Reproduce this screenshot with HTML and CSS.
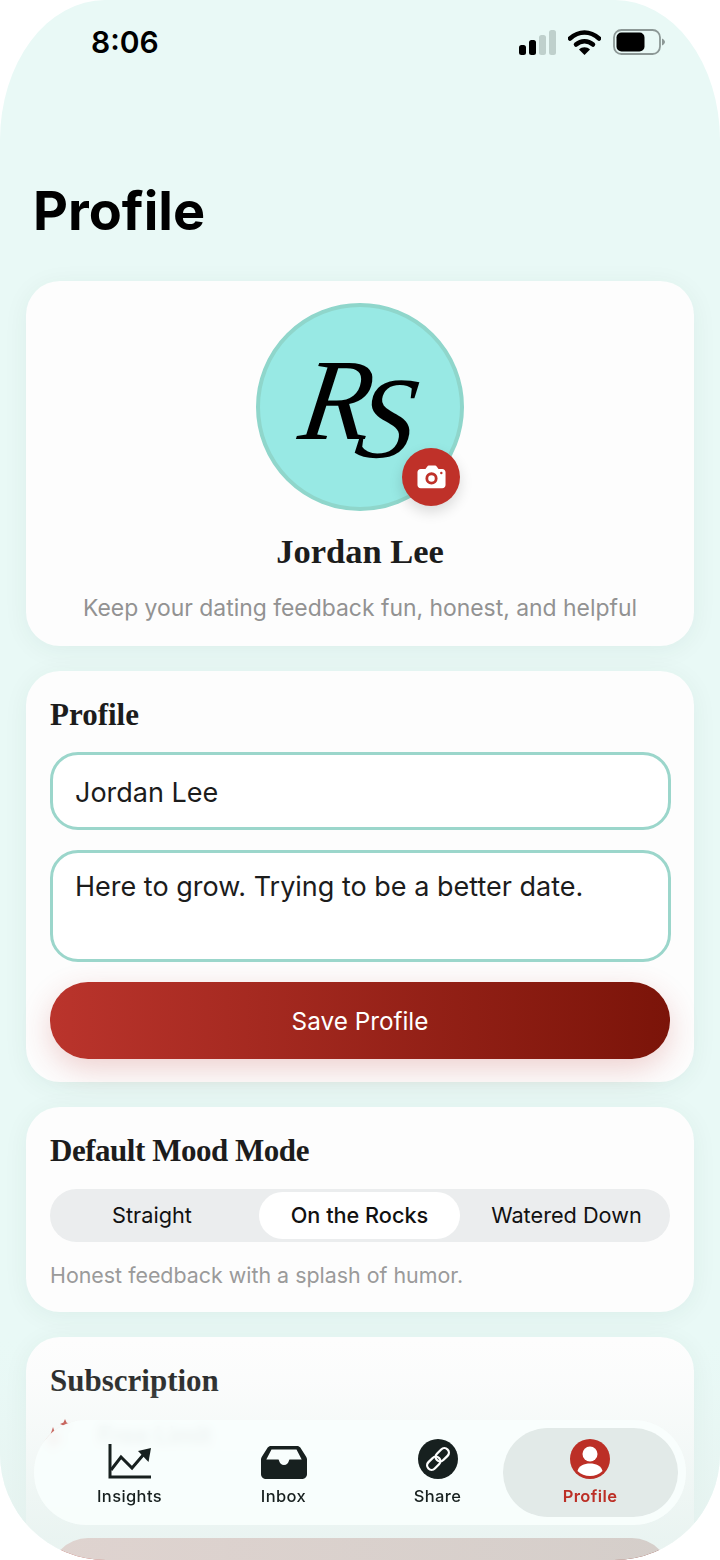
FILE: index.html
```html
<!DOCTYPE html>
<html>
<head>
    <title>Profile</title>
    <link rel="stylesheet" href="styles.css">
</head>
<body>
    <div class="phone">
        <div class="status-bar">
            <div class="status-time">8:06</div>
            <div class="status-icons">
                <svg class="icon-signal" width="37" height="25" viewBox="0 0 37 25">
                    <rect x="0" y="15" width="7" height="10" rx="2.5" fill="#000"/>
                    <rect x="10" y="10" width="7" height="15" rx="2.5" fill="#000"/>
                    <rect x="20" y="5" width="7" height="20" rx="2.5" fill="#bfd0cc"/>
                    <rect x="30" y="0" width="7" height="25" rx="2.5" fill="#bfd0cc"/>
                </svg>
                <svg class="icon-wifi" width="33" height="25" viewBox="0 0 33 25">
                    <path d="M2 8.5C11 .5 22 .5 31 8.5" fill="none" stroke="#000" stroke-width="4.5" stroke-linecap="round"/>
                    <path d="M8 14.5C13 10 20 10 25 14.5" fill="none" stroke="#000" stroke-width="4.5" stroke-linecap="round"/>
                    <path d="M11 19.5C14 16.5 19 16.5 22 19.5L16.5 25Z" fill="#000"/>
                </svg>
                <svg class="icon-battery" width="52" height="26" viewBox="0 0 52 26">
                    <rect x="1" y="1" width="46" height="24" rx="7.5" fill="none" stroke="#8c9896" stroke-width="1.8"/>
                    <rect x="3.5" y="3.5" width="28" height="19" rx="5" fill="#000"/>
                    <path d="M49 9.5C51 10.5 52 12 52 13S51 15.500 49 16.500Z" fill="#8c9896"/>
                </svg>
            </div>
        </div>

        <h1 class="page-title">Profile</h1>

        <div class="cards">
            <div class="card card-head">
                <div class="avatar">
                    <div class="monogram"><span>R</span><span class="monogram-s">S</span></div>
                    <div class="camera-btn">
                        <svg width="29" height="24" viewBox="0 0 31 25">
                            <path fill-rule="evenodd" fill="#fff" d="M4 4H9L11 1.200C11.300.6 12 .3 12.600.3H19.400C20 .3 20.700.6 21 1.200L23 4H27C29 4 30.500 5.500 30.500 7.500V21C30.500 23 29 24.500 27 24.500H4C2 24.500.5 23 .5 21V7.500C.5 5.500 2 4 4 4ZM15.500 7.500A6.500 6.500 0 1 0 15.500 20.500 6.500 6.500 0 1 0 15.500 7.500ZM15.500 10.500A3.500 3.500 0 1 1 15.500 17.500 3.500 3.500 0 1 1 15.500 10.500ZM26 7A1.300 1.300 0 1 0 26 9.600 1.300 1.300 0 1 0 26 7Z"/>
                        </svg>
                    </div>
                </div>
                <div class="user-name">Jordan Lee</div>
                <div class="user-tagline">Keep your dating feedback fun, honest, and helpful</div>
            </div>

            <div class="card">
                <h2 class="card-title">Profile</h2>
                <div class="field">Jordan Lee</div>
                <div class="field field-area">Here to grow. Trying to be a better date.</div>
                <div class="save-btn">Save Profile</div>
            </div>

            <div class="card">
                <h2 class="card-title card-title-tight">Default Mood Mode</h2>
                <div class="segments">
                    <div class="segment">Straight</div>
                    <div class="segment segment-active">On the Rocks</div>
                    <div class="segment segment-last">Watered Down</div>
                </div>
                <div class="mood-note">Honest feedback with a splash of humor.</div>
            </div>

            <div class="card">
                <h2 class="card-title">Subscription</h2>
                <div class="plan-row">
                    <svg class="plan-spark" width="30" height="44" viewBox="0 0 30 44">
                        <path d="M20 0l1.500 3.500 3.500 1.500-3.500 1.500L20 10l-1.500-3.500L15 5l3.500-1.500Z" fill="#bc2f26"/>
                        <path d="M8 8l3 9 9 3-9 3-3 9-3-9-4-3 4-3Z" fill="#bc2f26"/>
                    </svg>
                    <span class="plan-name">Free Limit</span>
                </div>
                <div class="upgrade-btn"></div>
            </div>
        </div>

        <div class="bottom-fade"></div>

        <div class="tab-bar">
            <div class="tab">
                <svg width="44" height="36" viewBox="0 0 44 36">
                    <path d="M2 1V34H43" fill="none" stroke="#17201f" stroke-width="3"/>
                    <path d="M3 27L13 14 24 25 36 11" fill="none" stroke="#17201f" stroke-width="3"/>
                    <path d="M30 8L43 5 40.500 19Z" fill="#17201f"/>
                </svg>
                <span class="tab-label">Insights</span>
            </div>
            <div class="tab">
                <svg width="46" height="33" viewBox="0 0 46 33">
                    <path fill-rule="evenodd" fill="#17201f" d="M10 0H36C37.500 0 38.500.6 39.300 1.600L45 10.500C45.700 11.500 46 12.500 46 13.500V28C46 30.800 44 33 41 33H5C2 33 0 30.800 0 28V13.500C0 12.500.3 11.500 1 10.500L6.700 1.600C7.500.6 8.500 0 10 0ZM10.500 3.500L5.300 13.500H17C17.500 13.500 18 14 18 14.500 18.500 17 20.500 19 23 19S27.500 17 28 14.500C28 14 28.500 13.500 29 13.500H40.700L35.500 3.500Z"/>
                </svg>
                <span class="tab-label">Inbox</span>
            </div>
            <div class="tab">
                <svg width="40" height="40" viewBox="0 0 40 40">
                    <circle cx="20" cy="20" r="20" fill="#17201f"/>
                    <g fill="none" stroke="#fff" stroke-width="2.300" transform="rotate(-45 20 20)">
                        <rect x="6.500" y="15.500" width="15" height="9" rx="4.500"/>
                        <rect x="18.500" y="15.500" width="15" height="9" rx="4.500"/>
                    </g>
                </svg>
                <span class="tab-label">Share</span>
            </div>
            <div class="tab tab-active">
                <svg width="40" height="40" viewBox="0 0 40 40">
                    <circle cx="20" cy="20" r="20" fill="#bc2f26"/>
                    <circle cx="20" cy="15" r="7.500" fill="#fff"/>
                    <path d="M7.500 32C9 26.500 14 24.500 20 24.500S31 26.500 32.500 32C29 35.500 25 37 20 37S11 35.500 7.500 32Z" fill="#fff"/>
                </svg>
                <span class="tab-label">Profile</span>
            </div>
        </div>
    </div>
</body>
</html>
```

FILE: styles.css
```css
body {
    margin: 0;
    background-color: #FFFFFF;
    font-family: "Inter", "Liberation Sans", sans-serif;
}
.phone {
    position: relative;
    width: 720px;
    height: 1560px;
    overflow: hidden;
    border-radius: 105px 105px 106px 106px / 140px 140px 106px 106px;
    background-color: #E9F9F6;
}
.status-bar {
    display: flex;
    justify-content: space-between;
    align-items: center;
    height: 84px;
    padding: 0 55px 0 91px;
}
.status-time {
    font-size: 30px;
    font-weight: 600;
    color: #000000;
}
.status-icons {
    display: flex;
    align-items: center;
    gap: 12px;
}
.page-title {
    margin: 0;
    padding: 88px 0 0 33px;
    font-size: 54px;
    line-height: 78px;
    font-weight: 700;
    color: #000000;
}
.cards {
    display: flex;
    flex-direction: column;
    gap: 25px;
    padding: 31px 26px 0;
}
.card {
    padding: 24px 24px 0;
    border-radius: 34px;
    background-color: #FDFDFD;
    box-shadow: 0px 4px 26px rgba(0, 60, 50, 0.06);
}
.card-head {
    display: flex;
    flex-direction: column;
    align-items: center;
    height: 365px;
    box-sizing: border-box;
    padding-top: 22px;
}
.avatar {
    position: relative;
    display: flex;
    align-items: center;
    justify-content: center;
    width: 208px;
    height: 208px;
    box-sizing: border-box;
    border: 4px solid #8FD6CB;
    border-radius: 50%;
    background-color: #98E9E4;
}
.monogram {
    display: flex;
    margin-top: -14px;
    font-family: "Liberation Serif", serif;
    font-style: italic;
    font-size: 116px;
    line-height: 116px;
    color: #000000;
    transform: skewX(-8deg);
}
.monogram-s {
    margin-left: -12px;
    transform: translateY(18px);
}
.camera-btn {
    position: absolute;
    right: 0;
    bottom: 1px;
    display: flex;
    align-items: center;
    justify-content: center;
    width: 58px;
    height: 58px;
    border-radius: 50%;
    background-color: #BF3129;
    box-shadow: 0px 6px 14px rgba(0, 0, 0, 0.14);
}
.user-name {
    margin-top: 17px;
    font-family: "Liberation Serif", serif;
    font-size: 34.500px;
    line-height: 46px;
    font-weight: 700;
    color: #1C1C1C;
}
.user-tagline {
    margin-top: 18px;
    font-size: 22.900px;
    line-height: 32px;
    color: #929292;
}
.card-title {
    margin: 0;
    font-family: "Liberation Serif", serif;
    font-size: 31px;
    line-height: 40px;
    font-weight: 700;
    color: #1C1C1C;
}
.card-title-tight {
    letter-spacing: -0.470px;
}
.field {
    box-sizing: border-box;
    height: 78px;
    margin-top: 17px;
    margin-right: -1px;
    padding: 20px 22px;
    border: 3px solid #9BD6CB;
    border-radius: 28px;
    background-color: #FFFFFF;
    font-size: 27px;
    line-height: 36px;
    color: #1C1C1C;
}
.field-area {
    height: 112px;
    margin-top: 20px;
    padding-top: 16px;
}
.save-btn {
    height: 77px;
    margin: 20px 0 23px;
    border-radius: 38px;
    background: linear-gradient(90deg, #BA342C 0%, #7B1409 100%);
    box-shadow: 0px 10px 30px rgba(186, 52, 44, 0.22);
    font-size: 24.300px;
    line-height: 78px;
    text-align: center;
    color: #FFFFFF;
}
.segments {
    display: flex;
    align-items: center;
    height: 53px;
    margin-top: 18px;
    border-radius: 27px;
    background-color: #EBEDEE;
}
.segment {
    width: 204px;
    height: 47px;
    border-radius: 24px;
    font-size: 21.700px;
    line-height: 47px;
    text-align: center;
    color: #111111;
}
.segment-active {
    width: 201px;
    margin: 0 3px 0 5px;
    background-color: #FFFFFF;
    font-weight: 500;
}
.segment-last {
    flex: 1;
}
.mood-note {
    margin: 18px 0 22px;
    font-size: 21.400px;
    line-height: 30px;
    color: #9A9A9A;
}
.plan-row {
    display: flex;
    align-items: flex-start;
    gap: 20px;
    height: 44px;
    margin: 18px 0 0 -5px;
}
.plan-name {
    margin-top: 2px;
    margin-left: 3px;
    font-size: 24px;
    font-weight: 600;
    color: #1C1C1C;
}
.upgrade-btn {
    height: 77px;
    margin-top: 75px;
    border-radius: 38px;
    background: linear-gradient(90deg, #BA342C 0%, #7B1409 100%);
}
.bottom-fade {
    position: absolute;
    left: 0;
    right: 0;
    bottom: 0;
    height: 220px;
    background: linear-gradient(180deg, rgba(230, 242, 239, 0) 0%, rgba(230, 242, 239, 0.1) 20%, rgba(230, 242, 239, 0.84) 90%);
}
.tab-bar {
    position: absolute;
    left: 34px;
    top: 1420px;
    display: flex;
    align-items: center;
    gap: 24px;
    width: 652px;
    height: 105px;
    box-sizing: border-box;
    padding: 0 8px 0 30.500px;
    border-radius: 52px;
    background-color: rgba(248, 254, 253, 0.92);
    backdrop-filter: blur(5px);
}
.tab {
    display: flex;
    flex-direction: column;
    align-items: center;
    justify-content: flex-end;
    flex: none;
    width: 130px;
    height: 89px;
    padding-bottom: 10px;
    box-sizing: border-box;
}
.tab svg {
    margin-bottom: 6px;
}
.tab-label {
    font-size: 16.500px;
    line-height: 22px;
    font-weight: 500;
    letter-spacing: 0.4px;
    color: #17201F;
}
.tab-active {
    width: 175px;
    margin-left: -24px;
    border-radius: 45px;
    background-color: #E2EAE8;
}
.tab-active .tab-label {
    font-weight: 600;
    color: #BC2F26;
}
```
